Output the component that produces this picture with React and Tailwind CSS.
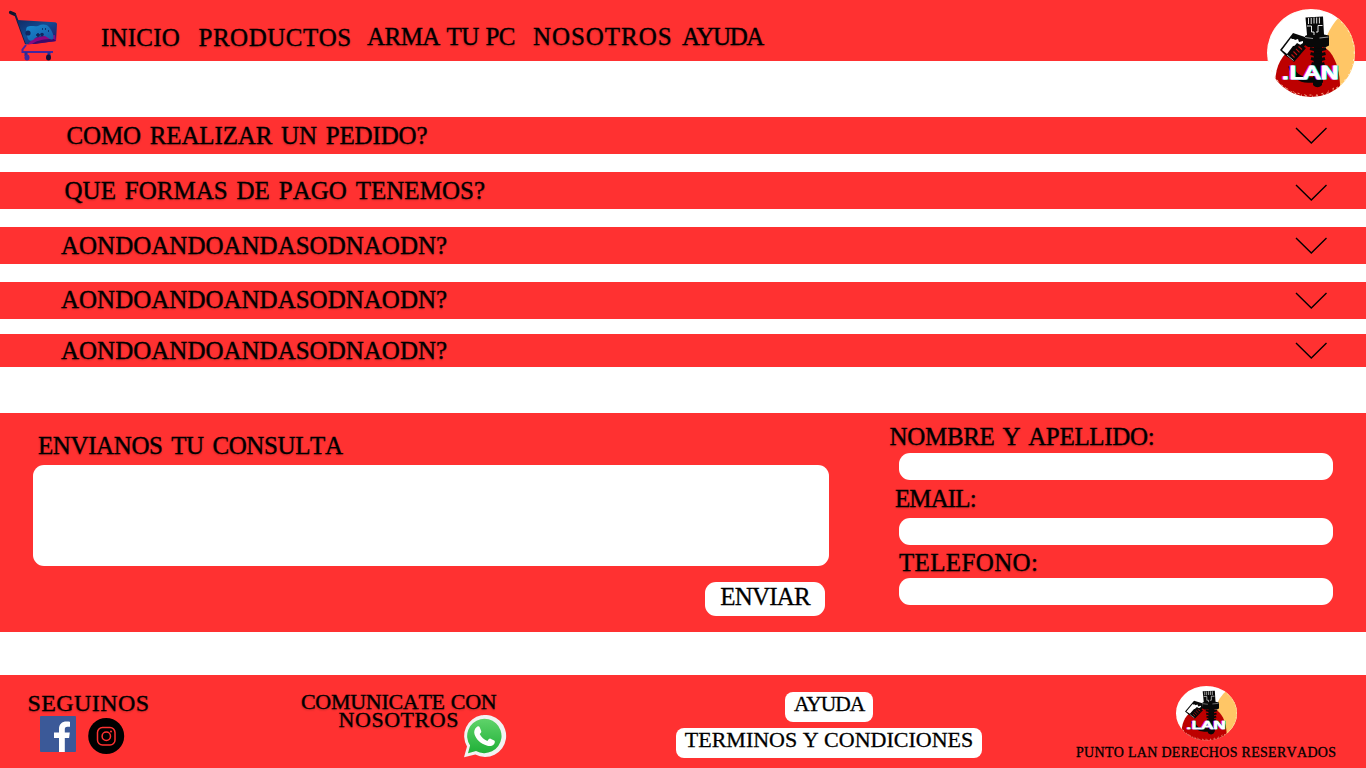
import React from "react";

const BASE =
  "block whitespace-nowrap leading-none text-black [-webkit-text-stroke:0.3px_#000]";
const SHADOW = "[text-shadow:0_1px_2px_rgba(0,0,0,0.3)]";

function Label({ as: Tag = "span", flat, kern, className = "", children }) {
  return (
    <Tag className={`${BASE} ${kern ? "" : "[font-kerning:none]"} ${flat ? "" : SHADOW} ${className}`}>
      {children}
    </Tag>
  );
}

function CartLogo() {
  return (
    <svg className="h-[52px] w-[52px] shrink-0" viewBox="0 0 52 52" fill="none">
      <defs>
        <linearGradient id="cart" x1="0" y1="0" x2="1" y2="1">
          <stop offset="0" stopColor="#102a63" />
          <stop offset=".45" stopColor="#124b93" />
          <stop offset="1" stopColor="#251060" />
        </linearGradient>
        <linearGradient id="pad" x1="0" y1="0" x2="1" y2="1">
          <stop offset="0" stopColor="#168bd0" />
          <stop offset="1" stopColor="#1857a5" />
        </linearGradient>
      </defs>
      <path d="M2.500 2.500l4 1.800" stroke="#10142b" strokeWidth="3.2" strokeLinecap="round" />
      <path d="M7 4l11 30" stroke="#171a40" strokeWidth="2" />
      <path d="M9 10l38 2.300c1.300 0 2 1 2 2L48 31l-30 3.500z" fill="url(#cart)" />
      <path d="M21 33c4-6 13-7 26-8l1 6-28 3.500z" fill="#8a0880" />
      <path d="M24 34c5-4 13-5 22-5l2 2-21 3z" fill="#3a0c6a" />
      <path
        d="M19 17c4-2 7 0 11-1 4-2 8-2 11 1 3 4 6 10 4 12-3 2-5-2-8-3-4 0-7 0-10 2-2 3-5 4-7 1-1-4-3-10-1-12z"
        fill="url(#pad)"
      />
      <circle cx="20" cy="23" r="2.600" fill="#102661" />
      <path d="M28 25h4M30 23v4M37 19h1M40 21h1M34 19h1" stroke="#0b2258" strokeWidth="1.4" />
      <circle cx="34" cy="24.500" r="1.800" fill="#102661" />
      <path d="M18 35l-3.500 4.500V42H45" stroke="#44269f" strokeWidth="2" />
      <path d="M18 42v4M41 42v4" stroke="#2b2e91" strokeWidth="3" />
      <ellipse cx="19" cy="47.500" rx="2.500" ry="3" fill="#3f2a9d" />
      <ellipse cx="40.500" cy="47.500" rx="2.500" ry="3" fill="#171234" />
    </svg>
  );
}

function LanLogo({ id, className }) {
  const letters = {
    fontFamily: "'DejaVu Sans', sans-serif",
    fontWeight: 400,
    fontSize: 17.5,
    textLength: 57.5,
    lengthAdjust: "spacingAndGlyphs",
    strokeWidth: 0.9,
    y: 69.8,
  };
  return (
    <svg className={className} viewBox="0 0 88 88" preserveAspectRatio="none">
      <defs>
        <clipPath id={id}>
          <circle cx="44" cy="44" r="44" />
        </clipPath>
      </defs>
      <g clipPath={`url(#${id})`}>
        <path d="M0 0h88v88H0z" fill="#fff" />
        <path d="M72 8c-5 6-10 12-14 24l8 56h22V8z" fill="#ffc666" />
        <path d="M8 73c1-17 7-28 18-34 12-6 29-6 37 4 7 9 10 22 10 35L62 88H18z" fill="#bd0000" />
        <circle cx="44" cy="44" r="43.300" fill="none" stroke="#fff3d8" strokeWidth="1" strokeDasharray="1 5 2 3" />
        <path d="M7 68c5 7 12 12 20 15 14 5 28 4 40-4" stroke="#ffb08a" strokeWidth=".9" strokeDasharray="1 4 2 5" fill="none" />
        <path d="M24 57c2 9 9 14 17 14l15 0" stroke="#080808" strokeWidth="5.500" fill="none" />
        <path d="M38.500 8.500l17.500-1 1 18 5 1v10l-3 1.500H41L38 36V27l2-1z" fill="#080808" />
        <path d="M41.500 9v6M44.200 9v6M47 8.500v6M49.700 8.500v6M52.400 8.500v6" stroke="#fff" strokeWidth=".9" />
        <path d="M40 17h4.500v6h2.500v3M55.500 16.500H51v6.500h-2" stroke="#fff" strokeWidth=".9" fill="none" />
        <path d="M38 28.500l8 1M61.500 28l-9 1" stroke="#fff" strokeWidth=".6" fill="none" />
        <path d="M47 36h8v40c-3 3-6 3-9 0z" fill="#080808" />
        <path d="M43 39.500l8 2 8-2M43.500 44.500l7.500 2 7.500-2M44 49.500l7 2 7-2M44.500 54.500l6.500 2 6.500-2" stroke="#080808" strokeWidth="3" fill="none" />
        <path d="M13 41L26 24l12 4 1 7-12 17-8-5z" fill="#080808" />
        <path d="M15 41l9-12c1 2 3 0 4 2l3-1 1 3 4-1v2l-3 2-7 1-6 8z" fill="#fff" />
        <path d="M20 46l10-12 9 5-12 14z" fill="#080808" />
        <path d="M26.500 42.500l3.500 3.500M29 39.800l3.500 3.500M31.500 37.500l3.500 3M24.500 45.500l3 3" stroke="#c11212" strokeWidth="1.100" />
        <path d="M20 46l6.500 5.500" stroke="#fff" strokeWidth=".7" />
      </g>
      <text x="13" fill="#ff24dc" stroke="#ff24dc" {...letters}>.LAN</text>
      <text x="15.400" fill="#22f3f3" stroke="#22f3f3" {...letters}>.LAN</text>
      <text x="14.200" fill="#fff" stroke="#fff" {...letters}>.LAN</text>
    </svg>
  );
}

function Chevron({ className }) {
  return (
    <svg className={`h-[18px] w-[34px] shrink-0 ${className}`} viewBox="0 0 34 18" fill="none">
      <path d="M2 1L17.300 16 32.500 1" stroke="#000" strokeWidth="1.4" />
    </svg>
  );
}

function FacebookIcon() {
  return (
    <svg className="mt-[41px] h-9 w-9 shrink-0" viewBox="0 0 36 36">
      <rect width="36" height="36" rx="1" fill="#3b5998" />
      <path d="M19 36V22h-5v-5.500h5V13c0-5 3-7.500 7.500-7.500 1.500 0 3 .1 3.500.2v5h-2.500c-2.200 0-2.700 1-2.700 2.700v3.100h5l-.7 5.500h-4.300v14z" fill="#fff" />
    </svg>
  );
}

function InstagramIcon() {
  return (
    <svg className="mt-[43px] ml-3 h-9 w-9 shrink-0 overflow-visible" viewBox="0 0 36 36" fill="none" stroke="#ff3131">
      <circle cx="18.200" cy="18" r="18" fill="#000" stroke="none" />
      <rect x="9.500" y="9.500" width="17.500" height="17.500" rx="5" strokeWidth="1.500" />
      <circle cx="18.300" cy="18.300" r="4.200" strokeWidth="1.500" />
      <circle cx="23" cy="13.500" r="1" fill="#ff3131" stroke="none" />
    </svg>
  );
}

function WhatsappIcon() {
  return (
    <svg className="mt-[39.500px] h-[43px] w-[43px] shrink-0" viewBox="0 0 43 43">
      <defs>
        <linearGradient id="wa" x1="0" y1="0" x2="0" y2="1">
          <stop offset="0" stopColor="#5fd36a" />
          <stop offset="1" stopColor="#20b038" />
        </linearGradient>
      </defs>
      <path d="M0 42.300L3 31.500A21 21 0 1 1 11.300 39.500z" fill="#f2f2f2" />
      <path d="M4 38.200l2.100-7.600A17.200 17.200 0 1 1 12 36z" fill="url(#wa)" />
      <path
        d="M12.200 12.500c1.400-1.500 2.800-1.700 3.500-.2l1.500 3.600c.4 1-.3 1.800-1.500 3 1.700 3.300 4.300 5.600 7.700 7 1.600-2 2.200-2.600 3.100-2.200l3.700 1.900c1 .5.7 2.200.1 3.200-1.200 2-4.100 2.800-6.900 2-7.300-2.400-11.300-6.600-12.900-11.600-.7-2.500 0-5.100 1.700-6.700z"
        fill="#fff"
      />
    </svg>
  );
}

const questions = [
  { text: "COMO REALIZAR UN PEDIDO?", row: "h-[37px]", label: "ml-[66.5px] mt-1.5 tracking-[-0.14px] [word-spacing:2.7px]", icon: "mt-[9.5px]" },
  { text: "QUE FORMAS DE PAGO TENEMOS?", row: "mt-[18px] h-[37px]", label: "ml-[64.5px] mt-1.5 tracking-[0.03px] [word-spacing:2.5px]", icon: "mt-[12px]" },
  { text: "AONDOANDOANDASODNAODN?", row: "mt-[18px] h-[37px]", label: "ml-[61px] mt-1.5", icon: "mt-[10px]" },
  { text: "AONDOANDOANDASODNAODN?", row: "mt-[18px] h-[37px]", label: "ml-[61px] mt-[5px]", icon: "mt-[10px]" },
  { text: "AONDOANDOANDASODNAODN?", row: "mt-[15px] h-[33px]", label: "ml-[61px] mt-[4px]", icon: "mt-2" },
];

export default function App() {
  return (
    <div className="flex h-[768px] w-[1366px] flex-col overflow-hidden bg-white font-['Liberation_Serif',serif] text-[25px]">
      <header className="relative flex h-[61px] shrink-0 items-start bg-[#ff3131]">
        <div className="w-[101px] shrink-0 pt-[10px] pl-2">
          <CartLogo />
        </div>
        <nav className="flex items-start">
          <Label as="a" className="mt-[25px] w-[97.5px] tracking-[0.2px]">INICIO</Label>
          <Label as="a" className="mt-[25px] w-[168.5px] tracking-[0.5px]">PRODUCTOS</Label>
          <Label as="a" className="mt-6 w-[166px] tracking-[-0.55px] [word-spacing:1px]">ARMA TU PC</Label>
          <Label as="a" className="mt-6 w-[149px] tracking-[0.95px]">NOSOTROS</Label>
          <Label as="a" kern className="mt-6 tracking-[-1.4px]">AYUDA</Label>
        </nav>
        <LanLogo id="logo-top" className="absolute top-[9px] left-[1267px] h-[88px] w-[88px]" />
      </header>

      <section className="mt-14 flex shrink-0 flex-col">
        {questions.map((q, i) => (
          <div key={i} className={`flex items-start justify-between bg-[#ff3131] pr-[38px] ${q.row}`}>
            <Label className={q.label}>{q.text}</Label>
            <Chevron className={q.icon} />
          </div>
        ))}
      </section>

      <form className="mt-[45.5px] flex h-[219.5px] shrink-0 bg-[#ff3131]">
        <div className="flex w-[829px] flex-col pt-[20.5px] pl-[33px]">
          <Label as="label" className="ml-[5px] tracking-[-0.4px] [word-spacing:2.8px]">ENVIANOS TU CONSULTA</Label>
          <textarea className="mt-[7px] h-[101px] w-full resize-none rounded-[11px] bg-white" />
          <button type="button" className="mt-4 mr-1 flex h-[34px] w-[120px] justify-center self-end rounded-[11px] bg-white">
            <Label flat className="mt-[2px] tracking-[-0.8px]">ENVIAR</Label>
          </button>
        </div>
        <div className="flex w-[504px] flex-col pt-[11.5px] pl-[70px]">
          <Label as="label" className="-ml-[9.5px] tracking-[-0.32px] [word-spacing:2px]">NOMBRE Y APELLIDO:</Label>
          <input className="mt-1 h-[27px] w-full rounded-[11px] bg-white" />
          <Label as="label" className="mt-[5.5px] -ml-[4px] tracking-[-0.9px]">EMAIL:</Label>
          <input className="mt-[7.5px] h-[27px] w-full rounded-[11px] bg-white" />
          <Label as="label" className="mt-[5px] tracking-[0.35px]">TELEFONO:</Label>
          <input className="mt-[2.5px] h-[27.5px] w-full rounded-[11px] bg-white" />
        </div>
      </form>

      <footer className="mt-[43px] flex h-[93px] shrink-0 bg-[#ff3131]">
        <div className="relative flex w-[300px] items-start pl-10">
          <Label className="absolute top-4 left-[27.5px] text-2xl !leading-none tracking-[0.4px]">SEGUINOS</Label>
          <FacebookIcon />
          <InstagramIcon />
        </div>
        <div className="flex w-[376px] items-start">
          <div className="flex w-[164px] flex-col pt-[18px] text-[22px]">
            <Label className="ml-px !leading-[18px] tracking-[-0.3px] [word-spacing:1px]">COMUNICATE CON</Label>
            <Label className="ml-[38.5px] !leading-[18px] tracking-[0.55px]">NOSOTROS</Label>
          </div>
          <WhatsappIcon />
        </div>
        <div className="flex w-[306px] flex-col items-center gap-1.5 pt-[17px]">
          <button type="button" className="flex h-[30px] w-[88px] justify-center rounded-[8px] bg-white">
            <Label flat kern className="mt-[1.5px] text-[21.5px] !leading-none tracking-[-1.1px]">AYUDA</Label>
          </button>
          <button type="button" className="flex h-[30px] w-[306px] justify-center rounded-[8px] bg-white">
            <Label flat className="mt-[1px] text-[22px] !leading-none">TERMINOS Y CONDICIONES</Label>
          </button>
        </div>
        <div className="flex flex-1 flex-col pt-[11px] pl-[94px]">
          <LanLogo id="logo-bottom" className="ml-[100px] h-[54.5px] w-[61px]" />
          <Label flat className="mt-[5px] text-[14px] !leading-none tracking-[0.3px]">PUNTO LAN DERECHOS RESERVADOS</Label>
        </div>
      </footer>
    </div>
  );
}
